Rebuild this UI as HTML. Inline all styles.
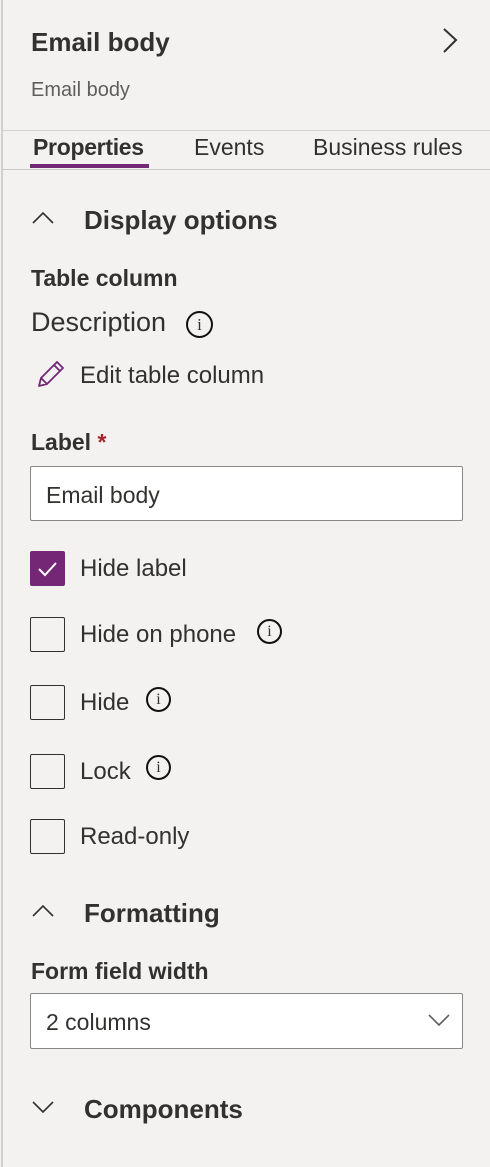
<!DOCTYPE html>
<html><head><style>
body{margin:0;width:490px;height:1167px;background:#f3f2f1;font-family:"Liberation Sans",sans-serif;color:#323130;position:relative;overflow:hidden}
.a{position:absolute;white-space:nowrap}
.sb{font-weight:bold}
.cb{position:absolute;left:30px;width:35px;height:35px;border:1px solid #323130;border-radius:2px;box-sizing:border-box;background:#f3f2f1}
.info{position:absolute;width:22px;height:22px;border:2px solid #111;border-radius:50%;box-sizing:border-box;font-size:14px;text-align:center;line-height:18px;font-family:"Liberation Serif",serif}
</style></head><body>
<div style="position:absolute;left:1px;top:0;width:2px;height:1167px;background:#d2d0ce"></div>
<div class="a sb" style="left:31px;top:27px;font-size:26px">Email body</div>
<svg class="a" style="left:440px;top:26px" width="20" height="30"><path d="M4 3 L16 14 L4 26" fill="none" stroke="#323130" stroke-width="2"/></svg>
<div class="a" style="left:31px;top:79px;font-size:20px;color:#605e5c">Email body</div>
<div style="position:absolute;left:3px;right:0;top:130px;height:1px;background:#d2d0ce"></div>
<div class="a" style="left:33px;top:134px;font-size:23px;font-weight:bold;color:#323130;letter-spacing:-0.3px">Properties</div>
<div style="position:absolute;left:30px;top:164px;width:119px;height:4px;background:#742774"></div>
<div class="a" style="left:194px;top:134px;font-size:23px">Events</div>
<div class="a" style="left:313px;top:134px;font-size:23px">Business rules</div>
<div style="position:absolute;left:3px;right:0;top:169px;height:1px;background:#c8c6c4"></div>
<svg class="a" style="left:30px;top:208px" width="26" height="20"><path d="M3 15 L13 5 L23 15" fill="none" stroke="#323130" stroke-width="1.6"/></svg>
<div class="a sb" style="left:84px;top:205px;font-size:26px">Display options</div>
<div class="a sb" style="left:31px;top:265px;font-size:23px">Table column</div>
<div class="a" style="left:31px;top:307px;font-size:27px">Description</div>
<div class="info" style="left:186px;top:311px;width:27px;height:27px;line-height:23px;font-size:17px">i</div>
<svg class="a" style="left:36px;top:359px" width="30" height="30"><path d="M3 27 L5 19 L21 3 L27 9 L11 25 Z M18 6 L24 12 M5 19 L11 25" fill="none" stroke="#742774" stroke-width="1.8" stroke-linejoin="round"/></svg>
<div class="a" style="left:80px;top:362px;font-size:24px">Edit table column</div>
<div class="a sb" style="left:31px;top:429px;font-size:23px">Label <span style="color:#a4262c">*</span></div>
<div style="position:absolute;left:30px;top:466px;width:433px;height:55px;border:1px solid #8a8886;border-radius:2px;box-sizing:border-box;background:#fff"></div>
<div class="a" style="left:46px;top:482px;font-size:23px">Email body</div>
<div class="cb" style="top:551px;background:#742774;border-color:#742774"></div>
<svg class="a" style="left:35px;top:557px" width="24" height="24"><path d="M4 12 L10 18 L21 6" fill="none" stroke="#fff" stroke-width="2"/></svg>
<div class="a" style="left:80px;top:555px;font-size:24px">Hide label</div>
<div class="cb" style="top:617px"></div>
<div class="a" style="left:80px;top:621px;font-size:24px">Hide on phone</div>
<div class="info" style="left:257px;top:619px;width:25px;height:25px;line-height:21px;font-size:16px">i</div>
<div class="cb" style="top:685px"></div>
<div class="a" style="left:80px;top:689px;font-size:24px">Hide</div>
<div class="info" style="left:146px;top:687px;width:25px;height:25px;line-height:21px;font-size:16px">i</div>
<div class="cb" style="top:754px"></div>
<div class="a" style="left:80px;top:758px;font-size:24px">Lock</div>
<div class="info" style="left:146px;top:755px;width:25px;height:25px;line-height:21px;font-size:16px">i</div>
<div class="cb" style="top:819px"></div>
<div class="a" style="left:80px;top:823px;font-size:24px">Read-only</div>
<svg class="a" style="left:30px;top:901px" width="26" height="20"><path d="M3 15 L13 5 L23 15" fill="none" stroke="#323130" stroke-width="1.6"/></svg>
<div class="a sb" style="left:84px;top:898px;font-size:26px">Formatting</div>
<div class="a sb" style="left:31px;top:958px;font-size:23px">Form field width</div>
<div style="position:absolute;left:30px;top:993px;width:433px;height:56px;border:1px solid #8a8886;border-radius:2px;box-sizing:border-box;background:#fff"></div>
<div class="a" style="left:46px;top:1009px;font-size:23px">2 columns</div>
<svg class="a" style="left:426px;top:1010px" width="26" height="20"><path d="M3 5 L13 15 L23 5" fill="none" stroke="#605e5c" stroke-width="1.6"/></svg>
<svg class="a" style="left:30px;top:1097px" width="26" height="20"><path d="M3 5 L13 15 L23 5" fill="none" stroke="#323130" stroke-width="1.6"/></svg>
<div class="a sb" style="left:84px;top:1094px;font-size:26px">Components</div>
</body></html>
